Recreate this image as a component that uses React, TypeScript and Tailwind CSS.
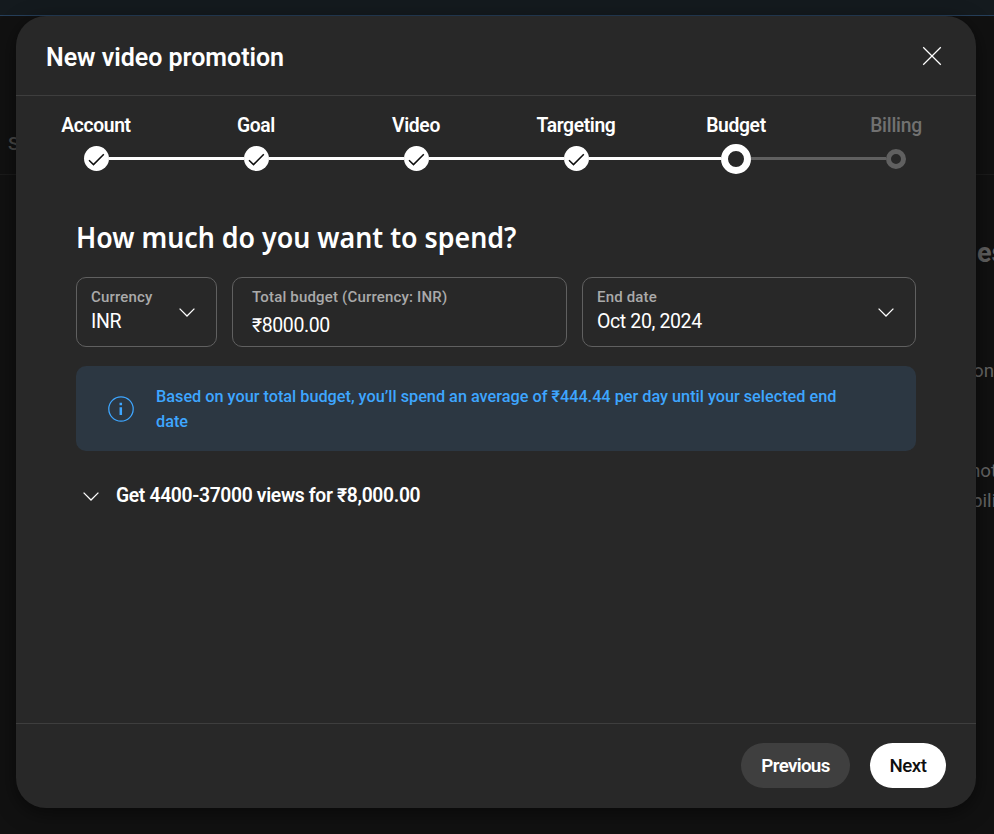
import React from 'react';

type StepState = 'done' | 'current' | 'upcoming';

const steps: { label: string; state: StepState }[] = [
  { label: 'Account', state: 'done' },
  { label: 'Goal', state: 'done' },
  { label: 'Video', state: 'done' },
  { label: 'Targeting', state: 'done' },
  { label: 'Budget', state: 'current' },
  { label: 'Billing', state: 'upcoming' },
];

function Chevron({ className = '' }: { className?: string }) {
  return (
    <svg className={className} width="18" height="12" viewBox="0 0 18 12" fill="none" stroke="white" strokeWidth="1.25">
      <path d="M1.6 1.6 9 9l7.4-7.4" />
    </svg>
  );
}

function Marker({ state }: { state: StepState }) {
  if (state === 'current') return <div className="mt-px size-[30px] shrink-0 rounded-full border-[7.5px] border-white" />;
  if (state === 'upcoming') return <div className="mt-px size-5 shrink-0 rounded-full border-[5px] border-[#606060]" />;
  return (
    <div className="size-[25px] shrink-0 rounded-full bg-white">
      <svg width="25" height="25" viewBox="0 0 25 25" fill="none" stroke="#0f0f0f" strokeWidth="1.5">
        <path d="M5 14.2 9.5 18.6 19.8 8.2" />
      </svg>
    </div>
  );
}

function Stepper() {
  return (
    <div className="flex">
      {steps.map((s, i) => (
        <div key={s.label} className="w-[160px] pt-[17px]">
          <div className={`text-center text-[19.3px] leading-[25px] ${s.state === 'upcoming' ? 'font-medium tracking-[-0.25px] text-[#717171]' : 'font-semibold tracking-[-0.36px] text-white'}`}>
            {s.label}
          </div>
          <div className="mt-[5px] flex h-[31px] items-center">
            <div className={`h-[3px] flex-1 ${i === 0 ? '' : s.state === 'upcoming' ? 'bg-[#606060]' : 'bg-white'}`} />
            <Marker state={s.state} />
            <div className={`h-[3px] flex-1 ${i === steps.length - 1 ? '' : s.state === 'current' ? 'bg-[#606060]' : 'bg-white'}`} />
          </div>
        </div>
      ))}
    </div>
  );
}

function Select({ label, value, className }: { label: string; value: string; className: string }) {
  return (
    <div className={`flex h-[70px] items-start justify-between rounded-[10px] border border-[#606060] pt-[9px] pl-[14px] pr-5 ${className}`}>
      <div>
        <div className="text-[15px] leading-5 font-medium tracking-[0.18px] text-[#aaaaaa]">{label}</div>
        <div className="mt-0.5 text-[19.5px] leading-[26px] font-[450] tracking-[-0.38px] text-white">{value}</div>
      </div>
      <Chevron className="mt-5" />
    </div>
  );
}

export default function App() {
  return (
    <div className="relative h-[834px] w-[994px] overflow-hidden bg-[#111111] font-['Roboto',sans-serif]">
      <div className="h-[15px] bg-[#141a1e]" />
      <div className="h-px bg-[#263f5a]" />
      <div className="h-[159px] border-b border-[#1b1b1b] pt-[115px] pl-2 text-[18.75px] leading-[26px] font-medium text-[#4a4a4a]">S</div>
      <div className="flex flex-col pl-[976px] whitespace-nowrap text-[#666666]">
        <div className="pt-[60px] pl-px text-[27px] leading-9 font-bold text-[#606060]">es</div>
        <div className="mt-[88px] -ml-[3px] text-[18.75px] leading-[24px]">on</div>
        <div className="mt-[73px] -ml-[6px] text-[18.75px] leading-[30px]">not</div>
        <div className="-ml-[4px] text-[18.75px] leading-[30px]">bility</div>
      </div>

      <div className="absolute top-4 left-4 flex h-[792px] w-[960px] flex-col overflow-hidden rounded-[30px] bg-[#282828] shadow-[0_5px_20px_rgba(0,0,0,0.5)]">
        <header className="flex h-20 items-center justify-between border-b border-[#3e3e3e] pr-[34px] pl-[30px]">
          <h1 className="pt-1 text-[25px] leading-8 font-semibold tracking-[-0.02px] text-white">New video promotion</h1>
          <svg width="20" height="20" viewBox="0 0 20 20" fill="none" stroke="white" strokeWidth="1.25">
            <path d="M1.2 1.2 18.8 18.8M18.8 1.2 1.2 18.8" />
          </svg>
        </header>

        <main className="flex-1">
          <Stepper />
          <div className="px-[60px] pt-[42px]">
            <h2 className="origin-left scale-x-[0.924] text-[29px] leading-[42px] font-semibold whitespace-nowrap text-white font-['Noto_Sans',sans-serif]">How much do you want to spend?</h2>
            <div className="mt-[19px] flex gap-[15px]">
              <Select label="Currency" value="INR" className="w-[141px]" />
              <div className="h-[70px] w-[335px] rounded-[10px] border border-[#606060] pt-[9px] pl-[19px]">
                <div className="text-[15px] leading-5 font-medium tracking-[0.18px] text-[#aaaaaa]">Total budget (Currency: INR)</div>
                <div className="mt-1.5 text-[19.5px] leading-[26px] font-[450] tracking-[-0.38px] text-white">₹8000.00</div>
              </div>
              <Select label="End date" value="Oct 20, 2024" className="w-[334px]" />
            </div>
            <div className="mt-[19px] flex h-[85px] rounded-[10px] bg-[#2c3742] pt-[18px] pl-8 text-[#3ea6ff]">
              <svg className="mt-3 shrink-0" width="26" height="26" viewBox="0 0 26 26" fill="none" stroke="currentColor">
                <circle cx="13" cy="13" r="12.2" strokeWidth="1.25" />
                <path d="M12.8 11.3v7.7M12.8 6.7v2.5" strokeWidth="2.5" />
              </svg>
              <p className="ml-[22px] w-[720px] text-[16.25px] leading-[25px] font-medium">
                Based on your total budget, you’ll spend an average of ₹444.44 per day until your selected end<br />date
              </p>
            </div>
            <div className="mt-8 flex items-center">
              <Chevron className="mt-0.5 ml-1.5" />
              <span className="ml-4 text-[19.3px] leading-[25px] font-semibold tracking-[-0.33px] text-white">Get 4400-37000 views for ₹8,000.00</span>
            </div>
          </div>
        </main>

        <footer className="flex h-[85px] items-start justify-end gap-5 border-t border-[#3e3e3e] pt-[19px] pr-[30px]">
          <button className="h-[45px] w-[109px] rounded-full bg-[#3f3f3f] pt-0.5 text-[18.75px] font-semibold tracking-[-0.66px] text-white">Previous</button>
          <button className="h-[45px] w-[76px] rounded-full bg-white pt-0.5 text-[18.75px] font-medium tracking-[-0.5px] text-[#0f0f0f]">Next</button>
        </footer>
      </div>
    </div>
  );
}
